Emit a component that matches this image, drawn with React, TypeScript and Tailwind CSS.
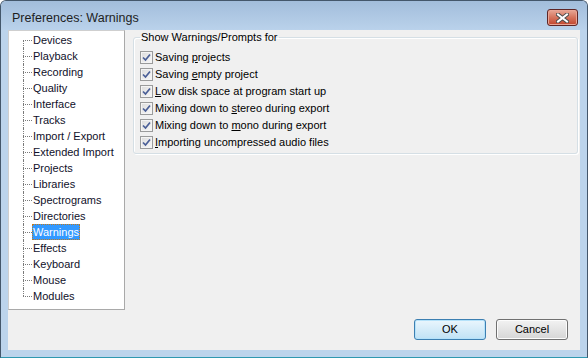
import clsx from "clsx";

const PAGES = [
  "Devices",
  "Playback",
  "Recording",
  "Quality",
  "Interface",
  "Tracks",
  "Import / Export",
  "Extended Import",
  "Projects",
  "Libraries",
  "Spectrograms",
  "Directories",
  "Warnings",
  "Effects",
  "Keyboard",
  "Mouse",
  "Modules",
];

// [before, mnemonic letter, after]
const WARNINGS: [string, string, string][] = [
  ["Saving ", "p", "rojects"],
  ["Saving ", "e", "mpty project"],
  ["", "L", "ow disk space at program start up"],
  ["Mixing down to ", "s", "tereo during export"],
  ["Mixing down to ", "m", "ono during export"],
  ["", "I", "mporting uncompressed audio files"],
];

function TreeRow({ label, first, last, selected }: { label: string; first: boolean; last: boolean; selected: boolean }) {
  return (
    <div className="flex h-4 items-center">
      <div className="ml-[14px] flex h-full w-[9px] flex-col">
        <div className={clsx("h-1/2", !first && "border-l border-dotted border-[#7a7a7a]")} />
        <div className={clsx("h-1/2 border-t border-dotted border-[#7a7a7a]", !last && "border-l")} />
      </div>
      <span
        className={clsx(
          "flex h-4 items-center px-[1px] leading-none",
          selected ? "bg-[#3399ff] text-white outline-1 outline-offset-[-1px] outline-dotted outline-[#c27a1c]" : "text-[#10102a]"
        )}
      >
        {label}
      </span>
    </div>
  );
}

function Check() {
  return (
    <span className="flex h-[13px] w-[13px] items-center justify-center border border-[#9a9b9b] bg-gradient-to-br from-[#dcdcdc] to-[#f8f8f8] shadow-[inset_0_0_0_1px_#f4f4f4]">
      <svg width="9" height="9" viewBox="0 0 9 9">
        <path d="M1 4.5 L3.5 7 L8 1.5" fill="none" stroke="#4a5f97" strokeWidth="1.7" />
      </svg>
    </span>
  );
}

function Button({ children, focused }: { children: string; focused?: boolean }) {
  return (
    <button
      className={clsx(
        "flex h-[21px] w-[72px] items-center justify-center rounded-[3px] border text-[11px] text-black",
        focused
          ? "border-[#3c7fb1] bg-gradient-to-b from-[#eaf6fd] to-[#c0e2f5] shadow-[inset_0_0_0_1px_#b5e2fa]"
          : "border-[#707070] bg-gradient-to-b from-[#f2f2f2] to-[#d6d6d6] shadow-[inset_0_0_0_1px_#fcfcfc]"
      )}
    >
      {children}
    </button>
  );
}

export default function App() {
  return (
    <div className="h-[358px] w-[588px] bg-white font-['Liberation_Sans',Arial,sans-serif] text-[11px]">
      <div className="flex h-full w-full flex-col rounded-t-[6px] border border-[#44576b] border-b-[#2f98b0] bg-[#bcd4ec]">
        {/* title bar */}
        <div className="flex h-[29px] shrink-0 items-start justify-between rounded-t-[5px] bg-gradient-to-b from-[#a2bddb] to-[#bad2eb] pl-[11px] pr-[9px]">
          <span className="mt-[11px] text-[12.5px] leading-none text-[#1e1e1e]">Preferences: Warnings</span>
          <button className="mt-[8px] flex h-[17px] w-[31px] items-center justify-center rounded-[3px] border border-[#5e2626] bg-gradient-to-b from-[#e7a897] via-[#d5735c] to-[#c1442c] shadow-[inset_0_0_0_1px_#e9a595]">
            <svg width="13" height="10" viewBox="0 0 13 10">
              <path d="M2 1.5 L11 8.5 M11 1.5 L2 8.5" stroke="#4b4b4b" strokeWidth="4" strokeLinecap="square" />
              <path d="M2 1.5 L11 8.5 M11 1.5 L2 8.5" stroke="#ffffff" strokeWidth="2" strokeLinecap="square" />
            </svg>
          </button>
        </div>

        {/* client area */}
        <div className="mx-[7px] mb-[7px] flex flex-1 flex-col bg-[#f0f0f0]">
          <div className="flex">
            <div className="h-[280px] w-[117px] shrink-0 border border-[#a9a9a9] border-l-[#cfcfcf] border-t-[#cfcfcf] bg-white pt-[1px]">
              {PAGES.map((p, i) => (
                <TreeRow key={p} label={p} first={i === 0} last={i === PAGES.length - 1} selected={p === "Warnings"} />
              ))}
            </div>

            <fieldset className="ml-[8px] mr-[2px] mt-[1px] h-[123px] flex-1 rounded-[3px] border border-[#d5dfe5] shadow-[inset_1px_1px_0_#ffffff,1px_1px_0_#ffffff]">
              <legend className="ml-[6px] px-[1px] leading-[13px] text-black">Show Warnings/Prompts for</legend>
              <div className="mt-[5px] flex flex-col">
                {WARNINGS.map(([a, m, b]) => (
                  <label key={a + m + b} className="flex h-[17px] items-center gap-[2px] pl-[6px] text-black">
                    <Check />
                    <span>
                      {a}
                      <u className="underline-offset-[1px]">{m}</u>
                      {b}
                    </span>
                  </label>
                ))}
              </div>
            </fieldset>
          </div>

          <div className="mr-[12px] mt-[9px] flex justify-end gap-[10px]">
            <Button focused>OK</Button>
            <Button>Cancel</Button>
          </div>
        </div>
      </div>
    </div>
  );
}
